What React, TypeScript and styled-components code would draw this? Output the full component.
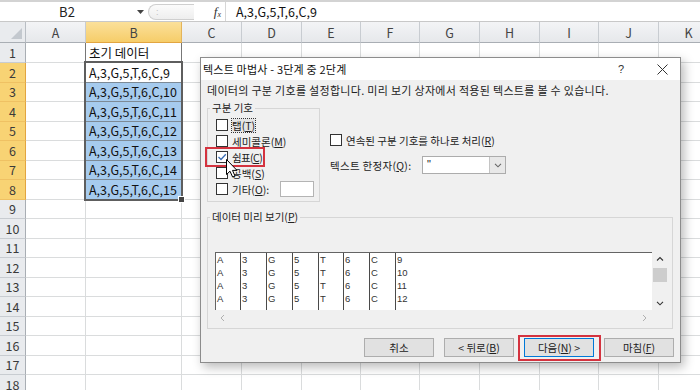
import React from 'react';
import styled, { createGlobalStyle, css } from 'styled-components';

const Global = createGlobalStyle`
  html, body { margin: 0; padding: 0; background: #fff; }
  body { width: 700px; height: 390px; overflow: hidden; font-family: "Noto Sans CJK KR", "Noto Sans", sans-serif; }
  #root { width: 700px; height: 390px; position: relative; overflow: hidden; }
`;

const KR = `"Noto Sans CJK KR", "Noto Sans", sans-serif`;

/* ---------- formula bar ---------- */
const FormulaBar = styled.div`
  height: 22px;
  box-sizing: border-box;
  border-top: 2px solid #d3d3d3;
  border-bottom: 1px solid #c8c8c8;
  display: flex;
  align-items: center;
  background: #fff;
`;
const NameBox = styled.div`
  width: 134px;
  text-align: center;
  font: 13px ${KR};
  color: #222;
`;
const DropArrow = styled.div`
  width: 12px;
  display: flex;
  justify-content: center;
`;
const Pill = styled.div`
  margin-left: 2px;
  width: 46px;
  height: 16px;
  box-sizing: border-box;
  border: 1px solid #cfcfcf;
  border-right: none;
  border-radius: 8px 0 0 8px;
  background: linear-gradient(#fbfbfb, #eeeeee);
  display: flex;
  align-items: center;
  padding-left: 7px;
  color: #c0c0c0;
  font: 9px "Liberation Sans", sans-serif;
`;
const Fx = styled.div`
  width: 31px;
  text-align: right;
  padding-right: 4px;
  box-sizing: border-box;
  font: italic 13px "Liberation Serif", serif;
  color: #333;
  sub { font-size: 8px; font-style: italic; vertical-align: -1px; }
`;
const FxSep = styled.div`
  width: 1px;
  align-self: stretch;
  background: #d6d6d6;
`;
const FormulaText = styled.div`
  padding-left: 10px;
  font: 12.5px ${KR};
  color: #111;
`;

/* ---------- sheet ---------- */
const Sheet = styled.div`
  display: grid;
  grid-template-columns: 26px 60px 96px 60px 60px 59px 59px 60px 60px 59px 60px 60px;
  grid-template-rows: 21px 20px repeat(17, 19.5px);
`;
const Corner = styled.div`
  grid-row: 1;
  grid-column: 1;
  background: #e9ebee;
  border-right: 1px solid #b9bec4;
  border-bottom: 1px solid #a9aeb4;
  box-sizing: border-box;
  display: flex;
  align-items: flex-end;
  justify-content: flex-end;
  padding: 0 3px 3px 0;
`;
const ColHeader = styled.div<{ $sel?: boolean }>`
  grid-row: 1;
  box-sizing: border-box;
  background: ${p => (p.$sel ? 'linear-gradient(#fbe09a, #f6cd69)' : 'linear-gradient(#f3f4f6, #e6e8eb)')};
  border-right: 1px solid ${p => (p.$sel ? '#e4b45a' : '#c8ccd1')};
  border-bottom: 1px solid ${p => (p.$sel ? '#e2a540' : '#a9aeb4')};
  display: flex;
  align-items: center;
  justify-content: center;
  font: 12.5px ${KR};
  color: #444;
`;
const RowHeader = styled.div<{ $sel?: boolean; $row: number }>`
  grid-row: ${p => p.$row + 1};
  grid-column: 1;
  box-sizing: border-box;
  background: ${p => (p.$sel ? '#f8d374' : '#e9ebee')};
  border-right: 1px solid ${p => (p.$sel ? '#e2a540' : '#a9aeb4')};
  border-bottom: 1px solid ${p => (p.$sel ? '#efc163' : '#c8ccd1')};
  display: flex;
  align-items: center;
  justify-content: center;
  font: 12.5px ${KR};
  color: #3a3a3a;
`;
const Cell = styled.div<{ $fill?: boolean; $edgeR?: boolean; $edgeB?: boolean; $row: number; $col: number }>`
  grid-row: ${p => p.$row + 1};
  grid-column: ${p => p.$col + 2};
  box-sizing: border-box;
  background: ${p => (p.$fill ? '#a6cbee' : '#fff')};
  border-right: 1px solid ${p => (p.$edgeR ? '#777' : '#dadcdd')};
  border-bottom: 1px solid ${p => (p.$edgeB ? '#7d8a96' : '#dadcdd')};
  font: 12.5px ${KR};
  color: #111;
  padding-left: 3px;
  display: flex;
  align-items: center;
  white-space: nowrap;
  overflow: hidden;
`;
const Selection = styled.div`
  grid-column: 3;
  grid-row: 3 / 10;
  margin: -2px -1px -1px -2px;
  border: 2px solid #5e5e5e;
  box-sizing: border-box;
  position: relative;
  pointer-events: none;
`;
const FillHandle = styled.div`
  position: absolute;
  right: -4px;
  bottom: -4px;
  width: 5px;
  height: 5px;
  background: #444;
  border: 1px solid #fff;
`;

/* ---------- dialog ---------- */
const Dialog = styled.div`
  position: absolute;
  left: 200px;
  top: 57px;
  width: 481px;
  height: 306px;
  box-sizing: border-box;
  border: 1px solid #8c8c8c;
  background: #f0f0f0;
  box-shadow: 3px 4px 10px rgba(0, 0, 0, 0.28);
  display: flex;
  flex-direction: column;
  font-family: ${KR};
  font-size: 10.5px;
  color: #222;
`;
const TitleBar = styled.div`
  height: 22px;
  background: #fff;
  display: flex;
  align-items: center;
  padding-left: 2px;
  flex: none;
`;
const TitleText = styled.div`
  font-size: 11px;
  letter-spacing: 0.2px;
  color: #111;
`;
const HelpBtn = styled.div`
  margin-left: auto;
  width: 48px;
  text-align: center;
  font: 11px "Liberation Sans", sans-serif;
  color: #333;
`;
const CloseBtn = styled.div`
  width: 35px;
  display: flex;
  justify-content: center;
`;
const Body = styled.div`
  padding: 0 6px;
  display: flex;
  flex-direction: column;
  flex: 1;
`;
const Desc = styled.div`
  margin-top: 2px;
  height: 16px;
  line-height: 16px;
  font-size: 11px;
  letter-spacing: 0.3px;
  white-space: nowrap;
`;
const OptionsRow = styled.div`
  margin-top: 3px;
  display: flex;
  align-items: flex-start;
`;
const Group = styled.fieldset<{ $w: number; $h: number }>`
  margin: 0;
  padding: 0;
  width: ${p => p.$w}px;
  height: ${p => p.$h}px;
  box-sizing: border-box;
  border: 1px solid #d6d6d6;
  min-width: 0;
`;
const Legend = styled.legend`
  margin-left: 2px;
  padding: 0 2px;
  line-height: 14px;
  font-size: 10.5px;
`;
const CheckList = styled.div`
  margin-top: 2px;
  padding-left: 8px;
  display: flex;
  flex-direction: column;
`;
const CheckRow = styled.div<{ $mark?: boolean }>`
  height: 16px;
  display: flex;
  align-items: center;
  gap: 4px;
  position: relative;
  white-space: nowrap;
  ${p =>
    p.$mark &&
    css`
      &::after {
        content: '';
        position: absolute;
        left: -11px;
        top: -2px;
        width: 60px;
        height: 20px;
        box-sizing: border-box;
        border: 2px solid #d4333f;
      }
    `}
`;
const Box = styled.span`
  width: 12px;
  height: 12px;
  box-sizing: border-box;
  border: 1px solid #333;
  background: #fff;
  display: inline-flex;
  align-items: center;
  justify-content: center;
  flex: none;
`;
const Label = styled.span<{ $focus?: boolean; $tight?: boolean }>`
  line-height: 13px;
  ${p => p.$tight && 'letter-spacing: -0.6px;'}
  ${p =>
    p.$focus &&
    css`
      outline: 1px dotted #333;
      outline-offset: 0;
      background: #e4e4e4;
    `}
  u { text-decoration: underline; }
`;
const SmallInput = styled.div`
  margin-left: 7px;
  width: 34px;
  height: 16px;
  box-sizing: border-box;
  background: #fff;
  border: 1px solid #b4b4b4;
`;
const RightCol = styled.div`
  margin-left: 10px;
  padding-top: 31px;
  display: flex;
  flex-direction: column;
`;
const QualRow = styled.div`
  margin-top: 8px;
  height: 18px;
  display: flex;
  align-items: center;
`;
const QualLabel = styled.span`
  width: 92px;
  white-space: nowrap;
  letter-spacing: 0.3px;
`;
const Select = styled.div`
  width: 84px;
  height: 18px;
  box-sizing: border-box;
  border: 1px solid #acacac;
  background: #fff;
  display: flex;
  align-items: stretch;
`;
const SelectValue = styled.div`
  flex: 1;
  padding-left: 4px;
  font: 11px "Liberation Sans", sans-serif;
  line-height: 14px;
  color: #222;
`;
const SelectBtn = styled.div`
  width: 15px;
  background: #e8e8e8;
  border-left: 1px solid #c4c4c4;
  display: flex;
  align-items: center;
  justify-content: center;
`;
const PreviewGroup = styled(Group)`
  margin-top: 8px;
`;
const PreviewFrame = styled.div`
  margin: 28px 0 0 7px;
  display: grid;
  grid-template-columns: 437px 16px;
  grid-template-rows: 58px 16px;
`;
const PreviewData = styled.div`
  background: #fff;
  border-top: 1px solid #646464;
  border-left: 1px solid #646464;
  display: flex;
  overflow: hidden;
`;
const PCol = styled.div<{ $w?: number; $line?: boolean }>`
  ${p => (p.$w ? `width: ${p.$w}px; flex: none;` : 'flex: 1;')}
  box-sizing: border-box;
  border-left: ${p => (p.$line ? '1px solid #4a4a4a' : 'none')};
  padding: 0 0 0 1px;
  font: 9.5px "Liberation Sans", sans-serif;
  color: #333;
  display: flex;
  flex-direction: column;
`;
const PCell = styled.div`
  height: 13px;
  line-height: 13px;
`;
const VScroll = styled.div`
  background: #f0f0f0;
  display: flex;
  flex-direction: column;
  align-items: center;
  justify-content: space-between;
  padding: 4px 0;
  box-sizing: border-box;
`;
const Thumb = styled.div`
  width: 14px;
  height: 14px;
  background: #cdcdcd;
  margin-top: -12px;
`;
const HScroll = styled.div`
  background: #f0f0f0;
  display: flex;
  align-items: center;
  justify-content: space-between;
  padding: 0 5px 0 5px;
`;
const ButtonRow = styled.div`
  margin-top: 9px;
  display: flex;
  justify-content: flex-end;
  gap: 10px;
`;
const Button = styled.div<{ $primary?: boolean; $mark?: boolean }>`
  width: 70px;
  height: 19px;
  box-sizing: border-box;
  background: #e1e1e1;
  border: 1px solid ${p => (p.$primary ? '#0078d7' : '#adadad')};
  display: flex;
  align-items: center;
  justify-content: center;
  font-size: 10.5px;
  color: #222;
  position: relative;
  white-space: nowrap;
  ${p =>
    p.$mark &&
    css`
      &::after {
        content: '';
        position: absolute;
        left: -7px;
        top: -4px;
        right: -8px;
        bottom: -5px;
        border: 2px solid #d4333f;
      }
    `}
`;
const Cursor = styled.svg`
  position: absolute;
  left: 10px;
  top: -6px;
  pointer-events: none;
`;

const cols = ['A', 'B', 'C', 'D', 'E', 'F', 'G', 'H', 'I', 'J', 'K'];
const data: Record<number, string> = {
  1: '초기 데이터',
  2: 'A,3,G,5,T,6,C,9',
  3: 'A,3,G,5,T,6,C,10',
  4: 'A,3,G,5,T,6,C,11',
  5: 'A,3,G,5,T,6,C,12',
  6: 'A,3,G,5,T,6,C,13',
  7: 'A,3,G,5,T,6,C,14',
  8: 'A,3,G,5,T,6,C,15',
};
const preview = [
  ['A', 'A', 'A', 'A'],
  ['3', '3', '3', '3'],
  ['G', 'G', 'G', 'G'],
  ['5', '5', '5', '5'],
  ['T', 'T', 'T', 'T'],
  ['6', '6', '6', '6'],
  ['C', 'C', 'C', 'C'],
  ['9', '10', '11', '12'],
];
const pWidths = [24, 26, 26, 26, 25, 26, 26, 0];

const Check = () => (
  <svg width="10" height="10" viewBox="0 0 10 10">
    <path d="M1.5 5 L4 7.5 L8.8 2.2" fill="none" stroke="#3b6db5" strokeWidth="1.3" />
  </svg>
);
const Chevron = ({ up, color = '#555' }: { up?: boolean; color?: string }) => (
  <svg width="8" height="5" viewBox="0 0 8 5">
    <path d={up ? 'M1 4.5 L4 1.5 L7 4.5' : 'M1 0.8 L4 3.8 L7 0.8'} fill="none" stroke={color} strokeWidth="1.1" />
  </svg>
);
const Side = ({ right }: { right?: boolean }) => (
  <svg width="5" height="8" viewBox="0 0 5 8">
    <path d={right ? 'M1 1 L4 4 L1 7' : 'M4 1 L1 4 L4 7'} fill="none" stroke="#b0b0b0" strokeWidth="1" />
  </svg>
);

export default function App() {
  const rows = Array.from({ length: 18 }, (_, i) => i + 1);
  return (
    <>
      <Global />
      <FormulaBar>
        <NameBox>B2</NameBox>
        <DropArrow>
          <svg width="7" height="4" viewBox="0 0 7 4">
            <path d="M0 0 H7 L3.5 4 Z" fill="#444" />
          </svg>
        </DropArrow>
        <Pill>:</Pill>
        <Fx>
          f<sub>x</sub>
        </Fx>
        <FxSep />
        <FormulaText>A,3,G,5,T,6,C,9</FormulaText>
      </FormulaBar>
      <Sheet>
        <Corner>
          <svg width="11" height="11" viewBox="0 0 11 11">
            <path d="M11 0 V11 H0 Z" fill="#c3c8ce" />
          </svg>
        </Corner>
        {cols.map(c => (
          <ColHeader key={c} $sel={c === 'B'}>
            {c}
          </ColHeader>
        ))}
        {rows.map(r => (
          <React.Fragment key={r}>
            <RowHeader $row={r} $sel={r >= 2 && r <= 8}>
              {r}
            </RowHeader>
            {cols.map((c, ci) => {
              const inB = c === 'B' && r <= 8;
              return (
                <Cell
                  key={c}
                  $row={r}
                  $col={ci}
                  $fill={c === 'B' && r >= 3 && r <= 8}
                  $edgeR={inB || (c === 'A' && r <= 8)}
                  $edgeB={inB}
                >
                  {c === 'B' ? data[r] : null}
                </Cell>
              );
            })}
          </React.Fragment>
        ))}
        <Selection>
          <FillHandle />
        </Selection>
      </Sheet>

      <Dialog>
        <TitleBar>
          <TitleText>텍스트 마법사 - 3단계 중 2단계</TitleText>
          <HelpBtn>?</HelpBtn>
          <CloseBtn>
            <svg width="11" height="11" viewBox="0 0 11 11">
              <path d="M0.5 0.5 L10.5 10.5 M10.5 0.5 L0.5 10.5" stroke="#333" strokeWidth="1" />
            </svg>
          </CloseBtn>
        </TitleBar>
        <Body>
          <Desc>데이터의 구분 기호를 설정합니다. 미리 보기 상자에서 적용된 텍스트를 볼 수 있습니다.</Desc>
          <OptionsRow>
            <Group $w={113} $h={101}>
              <Legend>구분 기호</Legend>
              <CheckList>
                <CheckRow>
                  <Box />
                  <Label $focus>
                    탭(<u>T</u>)
                  </Label>
                </CheckRow>
                <CheckRow>
                  <Box />
                  <Label>
                    세미콜론(<u>M</u>)
                  </Label>
                </CheckRow>
                <CheckRow $mark>
                  <Box>
                    <Check />
                  </Box>
                  <Label $tight>
                    쉼표(<u>C</u>)
                  </Label>
                </CheckRow>
                <CheckRow>
                  <Box />
                  <Label>
                    공백(<u>S</u>)
                  </Label>
                  <Cursor width="12" height="19" viewBox="0 0 12 19">
                    <path
                      d="M0.5 0.5 L0.5 15.5 L4 12.2 L6.6 18 L9 17 L6.5 11.4 L11 11.4 Z"
                      fill="#fff"
                      stroke="#000"
                      strokeWidth="1"
                      strokeLinejoin="round"
                    />
                  </Cursor>
                </CheckRow>
                <CheckRow>
                  <Box />
                  <Label>
                    기타(<u>O</u>):
                  </Label>
                  <SmallInput />
                </CheckRow>
              </CheckList>
            </Group>
            <RightCol>
              <CheckRow>
                <Box />
                <Label>
                  연속된 구분 기호를 하나로 처리(<u>R</u>)
                </Label>
              </CheckRow>
              <QualRow>
                <QualLabel>
                  텍스트 한정자(<u>Q</u>):
                </QualLabel>
                <Select>
                  <SelectValue>"</SelectValue>
                  <SelectBtn>
                    <Chevron color="#666" />
                  </SelectBtn>
                </Select>
              </QualRow>
            </RightCol>
          </OptionsRow>
          <PreviewGroup $w={466} $h={119}>
            <Legend>
              데이터 미리 보기(<u>P</u>)
            </Legend>
            <PreviewFrame>
              <PreviewData>
                {preview.map((col, i) => (
                  <PCol key={i} $w={pWidths[i] || undefined} $line={i > 0}>
                    {col.map((v, j) => (
                      <PCell key={j}>{v}</PCell>
                    ))}
                  </PCol>
                ))}
              </PreviewData>
              <VScroll>
                <Chevron up color="#333" />
                <Thumb />
                <Chevron color="#333" />
              </VScroll>
              <HScroll>
                <Side />
                <Side right />
              </HScroll>
              <div />
            </PreviewFrame>
          </PreviewGroup>
          <ButtonRow>
            <Button>취소</Button>
            <Button>
              &lt; 뒤로(<u>B</u>)
            </Button>
            <Button $primary $mark>
              다음(<u>N</u>) &gt;
            </Button>
            <Button>
              마침(<u>F</u>)
            </Button>
          </ButtonRow>
        </Body>
      </Dialog>
    </>
  );
}
